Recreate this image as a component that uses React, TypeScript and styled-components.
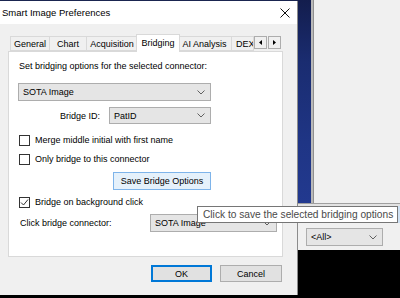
import React from "react";
import styled, { createGlobalStyle } from "styled-components";

const GlobalStyle = createGlobalStyle`
  html, body { margin: 0; padding: 0; overflow: hidden; background: #000; }
  * { box-sizing: border-box; }
`;

const UI = `"Liberation Sans", Arial, sans-serif`;

const Screen = styled.div`
  position: relative;
  width: 400px;
  height: 298px;
  display: grid;
  grid-template-columns: 298px 102px;
  background: #000;
  font-family: ${UI};
  font-size: 9px;
  color: #000;
  overflow: hidden;
`;

const LeftCol = styled.div`
  display: flex;
  flex-direction: column;
  background: #000;
  border-top: 1px solid #1a2550;
`;

const Dialog = styled.div`
  height: 294px;
  display: flex;
  flex-direction: column;
  background: #f0f0f0;
  border-right: 1px solid #8c8c8c;
`;

const TitleBar = styled.div`
  height: 23px;
  background: #fff;
  display: flex;
  align-items: center;
  justify-content: space-between;
  padding: 0 7px 0 2px;
`;

const TitleText = styled.span`
  font-size: 9.5px;
  color: #000;
`;

const Body = styled.div`
  flex: 1;
  display: flex;
  flex-direction: column;
  padding: 10px 14px 0 8px;
`;

const TabStrip = styled.div`
  display: flex;
  align-items: flex-end;
  height: 17px;
  padding-left: 2px;
  position: relative;
  z-index: 1;
`;

type TabProps = { $w: number; $active?: boolean; $first?: boolean; $clip?: boolean };

const Tab = styled.div<TabProps>`
  width: ${(p) => p.$w}px;
  height: ${(p) => (p.$active ? 18 : 15)}px;
  margin: ${(p) => (p.$active ? "0 -2px -1px -2px" : "0")};
  background: ${(p) => (p.$active ? "#fff" : "#f0f0f0")};
  border: 1px solid #d9d9d9;
  border-bottom: ${(p) => (p.$active ? "none" : "1px solid #d9d9d9")};
  border-left: ${(p) => (p.$first || p.$active ? "1px solid #d9d9d9" : "none")};
  display: flex;
  align-items: center;
  justify-content: ${(p) => (p.$clip ? "flex-start" : "center")};
  padding-left: ${(p) => (p.$clip ? 4 : 0)}px;
  padding-bottom: ${(p) => (p.$active ? 2 : 0)}px;
  white-space: nowrap;
  overflow: hidden;
  position: relative;
  z-index: ${(p) => (p.$active ? 2 : 1)};
`;

const TabArrows = styled.div`
  display: flex;
  margin-bottom: 2px;
`;

const ArrowBtn = styled.div`
  width: 13px;
  height: 13px;
  background: #f0f0f0;
  border: 1px solid #adadad;
  display: flex;
  align-items: center;
  justify-content: center;
  & + & { margin-left: 1px; }
`;

const Panel = styled.div`
  height: 206px;
  background: #fff;
  border: 1px solid #d9d9d9;
  display: flex;
  flex-direction: column;
  padding: 0 0 0 9px;
`;

const Label = styled.div<{ $top?: number }>`
  margin-top: ${(p) => p.$top ?? 0}px;
  padding-left: 1px;
  height: 12px;
  line-height: 12px;
  white-space: nowrap;
`;

const Combo = styled.div<{ $w: number; $h?: number; $top?: number }>`
  width: ${(p) => p.$w}px;
  height: ${(p) => p.$h ?? 18}px;
  margin-top: ${(p) => p.$top ?? 0}px;
  background: #e5e5e5;
  border: 1px solid #adadad;
  display: flex;
  align-items: center;
  justify-content: space-between;
  padding: 0 5px 0 4px;
  white-space: nowrap;
  flex-shrink: 0;
`;

const Row = styled.div<{ $top?: number; $gap?: number }>`
  display: flex;
  align-items: center;
  margin-top: ${(p) => p.$top ?? 0}px;
  gap: ${(p) => p.$gap ?? 0}px;
`;

const RowLabel = styled.div<{ $w: number; $right?: boolean }>`
  width: ${(p) => p.$w}px;
  text-align: ${(p) => (p.$right ? "right" : "left")};
  padding-left: ${(p) => (p.$right ? 0 : 2)}px;
  white-space: nowrap;
`;

const CheckRow = styled.div<{ $top: number }>`
  display: flex;
  align-items: center;
  height: 12px;
  margin-top: ${(p) => p.$top}px;
  padding-left: 1px;
  gap: 5px;
  white-space: nowrap;
`;

const Box = styled.div`
  width: 11px;
  height: 11px;
  border: 1px solid #333;
  background: #fff;
  display: flex;
  align-items: center;
  justify-content: center;
`;

type ButtonProps = {
  $w: number;
  $h?: number;
  $left?: number;
  $top?: number;
  $variant?: "hover" | "default" | "normal";
};

const Button = styled.div<ButtonProps>`
  width: ${(p) => p.$w}px;
  height: ${(p) => p.$h ?? 18}px;
  margin-left: ${(p) => p.$left ?? 0}px;
  margin-top: ${(p) => p.$top ?? 0}px;
  display: flex;
  align-items: center;
  justify-content: center;
  white-space: nowrap;
  background: ${(p) => (p.$variant === "hover" ? "#e5f1fb" : "#e1e1e1")};
  border: 1px solid
    ${(p) =>
      p.$variant === "hover" ? "#7eb4ea" : p.$variant === "default" ? "#0078d7" : "#adadad"};
  box-shadow: ${(p) => (p.$variant === "default" ? "inset 0 0 0 1px #0078d7" : "none")};
`;

const Footer = styled.div`
  display: flex;
  justify-content: flex-end;
  gap: 8px;
  margin-top: 8px;
  padding-right: 1px;
`;

const RightCol = styled.div`
  display: grid;
  grid-template-rows: 203px 3px 17px 27px 1fr;
`;

const TopArea = styled.div`
  display: flex;
`;

const NavyBar = styled.div`
  width: 13px;
  background: linear-gradient(#131d4d 0%, #1a2c70 30%, #1f3585 70%, #22398f 100%);
`;

const VDivider = styled.div`
  width: 3px;
  background: #b9b9b9;
  border-right: 1px solid #8f8f8f;
`;

const Pane = styled.div`
  flex: 1;
  background: #f0f0f0;
`;

const HLine = styled.div`
  background: #e3e3e3;
  border-top: 1px solid #a0a0a0;
`;

const Highlight = styled.div`
  background: #cfe1f3;
`;

const ToolRow = styled.div`
  background: #f0f0f0;
  padding: 5px 0 0 8px;
`;

const Tooltip = styled.div`
  position: absolute;
  left: 197px;
  top: 206px;
  width: 201px;
  height: 17px;
  background: #fff;
  border: 1px solid #767676;
  color: #4a4a4a;
  font-size: 10.2px;
  line-height: 15px;
  padding-left: 5px;
  white-space: nowrap;
  z-index: 5;
`;

const Chevron = () => (
  <svg width="8" height="5" viewBox="0 0 8 5">
    <path d="M0.5 0.5 L4 4 L7.5 0.5" fill="none" stroke="#606060" strokeWidth="1" />
  </svg>
);

const CloseIcon = () => (
  <svg width="10" height="10" viewBox="0 0 10 10">
    <path d="M0.5 0.5 L9.5 9.5 M9.5 0.5 L0.5 9.5" stroke="#111" strokeWidth="1" />
  </svg>
);

const Tri = ({ dir }: { dir: "l" | "r" }) => (
  <svg width="3" height="5" viewBox="0 0 3 5">
    <path d={dir === "l" ? "M3 0 L0 2.5 L3 5 Z" : "M0 0 L3 2.5 L0 5 Z"} fill="#000" />
  </svg>
);

const Check = () => (
  <svg width="9" height="9" viewBox="0 0 9 9">
    <path d="M1 4.5 L3.5 7 L8 1.5" fill="none" stroke="#333" strokeWidth="1" />
  </svg>
);

const tabs: { label: string; w: number; active?: boolean; clip?: boolean }[] = [
  { label: "General", w: 40 },
  { label: "Chart", w: 37 },
  { label: "Acquisition", w: 51 },
  { label: "Bridging", w: 44, active: true },
  { label: "AI Analysis", w: 54 },
  { label: "DEX", w: 22, clip: true },
];

export default function App() {
  return (
    <>
      <GlobalStyle />
      <Screen>
        <LeftCol>
          <Dialog>
            <TitleBar>
              <TitleText>Smart Image Preferences</TitleText>
              <CloseIcon />
            </TitleBar>
            <Body>
              <TabStrip>
                {tabs.map((t, i) => (
                  <Tab key={t.label} $w={t.w} $active={t.active} $first={i === 0} $clip={t.clip}>
                    {t.label}
                  </Tab>
                ))}
                <TabArrows>
                  <ArrowBtn>
                    <Tri dir="l" />
                  </ArrowBtn>
                  <ArrowBtn>
                    <Tri dir="r" />
                  </ArrowBtn>
                </TabArrows>
              </TabStrip>
              <Panel>
                <Label $top={8}>Set bridging options for the selected connector:</Label>
                <Combo $w={193} $top={11}>
                  <span>SOTA Image</span>
                  <Chevron />
                </Combo>
                <Row $top={6} $gap={9}>
                  <RowLabel $w={82} $right>
                    Bridge ID:
                  </RowLabel>
                  <Combo $w={102} $h={17}>
                    <span>PatID</span>
                    <Chevron />
                  </Combo>
                </Row>
                <CheckRow $top={10}>
                  <Box />
                  <span>Merge middle initial with first name</span>
                </CheckRow>
                <CheckRow $top={7}>
                  <Box />
                  <span>Only bridge to this connector</span>
                </CheckRow>
                <Button $w={98} $left={95} $top={7} $variant="hover">
                  Save Bridge Options
                </Button>
                <CheckRow $top={6}>
                  <Box>
                    <Check />
                  </Box>
                  <span>Bridge on background click</span>
                </CheckRow>
                <Row $top={6}>
                  <RowLabel $w={132}>Click bridge connector:</RowLabel>
                  <Combo $w={127} $h={18}>
                    <span>SOTA Image</span>
                    <Chevron />
                  </Combo>
                </Row>
              </Panel>
              <Footer>
                <Button $w={61} $h={17} $variant="default">
                  OK
                </Button>
                <Button $w={62} $h={17} $variant="normal">
                  Cancel
                </Button>
              </Footer>
            </Body>
          </Dialog>
        </LeftCol>
        <RightCol>
          <TopArea>
            <NavyBar />
            <VDivider />
            <Pane />
          </TopArea>
          <HLine />
          <Highlight />
          <ToolRow>
            <Combo $w={77} $h={18}>
              <span>&lt;All&gt;</span>
              <Chevron />
            </Combo>
          </ToolRow>
          <div />
        </RightCol>
        <Tooltip>Click to save the selected bridging options</Tooltip>
      </Screen>
    </>
  );
}
